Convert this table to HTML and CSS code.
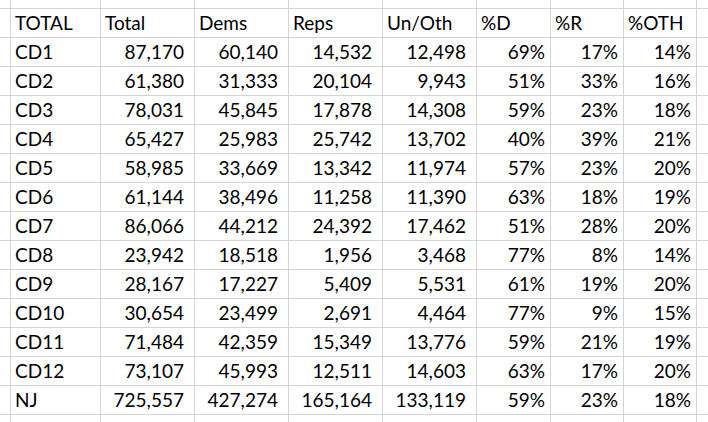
FILE: index.html
```html
<!DOCTYPE html>
<html>
<head>
<meta charset="utf-8">
<link rel="stylesheet" href="styles.css">
</head>
<body>
<div class="sheet">
<div class="c"></div><div class="c"></div><div class="c"></div><div class="c"></div><div class="c"></div><div class="c"></div><div class="c"></div><div class="c"></div><div class="c"></div><div class="c"></div>
<div class="c"></div><div class="c t">TOTAL</div><div class="c t">Total</div><div class="c t">Dems</div><div class="c t">Reps</div><div class="c t">Un/Oth</div><div class="c t">%D</div><div class="c t">%R</div><div class="c t">%OTH</div><div class="c"></div>
<div class="c"></div><div class="c t">CD1</div><div class="c n">87,170</div><div class="c n">60,140</div><div class="c n">14,532</div><div class="c n">12,498</div><div class="c p">69%</div><div class="c p">17%</div><div class="c p">14%</div><div class="c"></div>
<div class="c"></div><div class="c t">CD2</div><div class="c n">61,380</div><div class="c n">31,333</div><div class="c n">20,104</div><div class="c n">9,943</div><div class="c p">51%</div><div class="c p">33%</div><div class="c p">16%</div><div class="c"></div>
<div class="c"></div><div class="c t">CD3</div><div class="c n">78,031</div><div class="c n">45,845</div><div class="c n">17,878</div><div class="c n">14,308</div><div class="c p">59%</div><div class="c p">23%</div><div class="c p">18%</div><div class="c"></div>
<div class="c"></div><div class="c t">CD4</div><div class="c n">65,427</div><div class="c n">25,983</div><div class="c n">25,742</div><div class="c n">13,702</div><div class="c p">40%</div><div class="c p">39%</div><div class="c p">21%</div><div class="c"></div>
<div class="c"></div><div class="c t">CD5</div><div class="c n">58,985</div><div class="c n">33,669</div><div class="c n">13,342</div><div class="c n">11,974</div><div class="c p">57%</div><div class="c p">23%</div><div class="c p">20%</div><div class="c"></div>
<div class="c"></div><div class="c t">CD6</div><div class="c n">61,144</div><div class="c n">38,496</div><div class="c n">11,258</div><div class="c n">11,390</div><div class="c p">63%</div><div class="c p">18%</div><div class="c p">19%</div><div class="c"></div>
<div class="c"></div><div class="c t">CD7</div><div class="c n">86,066</div><div class="c n">44,212</div><div class="c n">24,392</div><div class="c n">17,462</div><div class="c p">51%</div><div class="c p">28%</div><div class="c p">20%</div><div class="c"></div>
<div class="c"></div><div class="c t">CD8</div><div class="c n">23,942</div><div class="c n">18,518</div><div class="c n">1,956</div><div class="c n">3,468</div><div class="c p">77%</div><div class="c p">8%</div><div class="c p">14%</div><div class="c"></div>
<div class="c"></div><div class="c t">CD9</div><div class="c n">28,167</div><div class="c n">17,227</div><div class="c n">5,409</div><div class="c n">5,531</div><div class="c p">61%</div><div class="c p">19%</div><div class="c p">20%</div><div class="c"></div>
<div class="c"></div><div class="c t">CD10</div><div class="c n">30,654</div><div class="c n">23,499</div><div class="c n">2,691</div><div class="c n">4,464</div><div class="c p">77%</div><div class="c p">9%</div><div class="c p">15%</div><div class="c"></div>
<div class="c"></div><div class="c t">CD11</div><div class="c n">71,484</div><div class="c n">42,359</div><div class="c n">15,349</div><div class="c n">13,776</div><div class="c p">59%</div><div class="c p">21%</div><div class="c p">19%</div><div class="c"></div>
<div class="c"></div><div class="c t">CD12</div><div class="c n">73,107</div><div class="c n">45,993</div><div class="c n">12,511</div><div class="c n">14,603</div><div class="c p">63%</div><div class="c p">17%</div><div class="c p">20%</div><div class="c"></div>
<div class="c"></div><div class="c t">NJ</div><div class="c n">725,557</div><div class="c n">427,274</div><div class="c n">165,164</div><div class="c n">133,119</div><div class="c p">59%</div><div class="c p">23%</div><div class="c p">18%</div><div class="c"></div>
<div class="c"></div><div class="c"></div><div class="c"></div><div class="c"></div><div class="c"></div><div class="c"></div><div class="c"></div><div class="c"></div><div class="c"></div><div class="c"></div>
</div>
</body>
</html>
```

FILE: styles.css
```css
html, body {
  margin: 0;
  padding: 0;
  width: 708px;
  height: 422px;
  overflow: hidden;
  background: #ffffff;
}

.sheet {
  display: grid;
  grid-template-columns: 10px 89px 93px 93px 93px 93px 73px 72px 72px 30px;
  grid-template-rows: 8px repeat(14, 28px) 28px;
  gap: 1px;
  background: #d4d4d4;
  width: 740px;
  font-family: "Lato", "Liberation Sans", sans-serif;
  font-size: 19px;
  color: #000000;
}

.c {
  background: #ffffff;
  line-height: 28px;
  white-space: nowrap;
  overflow: hidden;
}

.t {
  padding-left: 4px;
  text-align: left;
}

.n {
  padding-right: 10px;
  text-align: right;
}

.p {
  padding-right: 5px;
  text-align: right;
}
```
